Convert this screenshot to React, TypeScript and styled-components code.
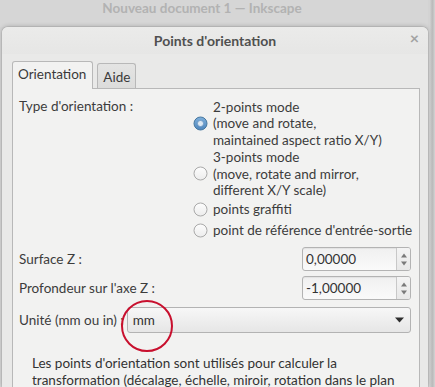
import React from "react";
import styled, { createGlobalStyle } from "styled-components";

const Global = createGlobalStyle`
  html, body { margin: 0; padding: 0; }
  body {
    width: 435px; height: 387px; overflow: hidden;
    background: #d3d3d3;
    font-family: Lato, "Open Sans", "Noto Sans", sans-serif;
    font-size: 13.5px; color: #3c3c3c;
  }
`;

const Screen = styled.div`
  width: 435px; height: 387px; overflow: hidden;
  background: linear-gradient(to right, #d3d3d3 0, #d3d3d3 430px, #c4c4c4 431px, #b9b9b9 433px, #cfcfcf 434px);
`;

const AppTitle = styled.div`
  height: 27px; line-height: 17px; text-align: center;
  padding-right: 24px; box-sizing: border-box;
  font-weight: bold; font-size: 13.5px; color: #b2b2b2;
  background: #d6d6d6;
  width: 428px;
`;

const Dialog = styled.div`
  margin-left: 2px; width: 426px; height: 360px;
  background: #e9e9e8;
  border-radius: 6px 6px 0 0;
  box-shadow: 0 -1px 4px rgba(0,0,0,0.18), 0 0 0 1px rgba(0,0,0,0.06);
  overflow: hidden;
`;

const DialogTitle = styled.div`
  height: 27px; display: flex; align-items: center; justify-content: center;
  position: relative;
  font-weight: bold; color: #505050; font-size: 14px;
  background: linear-gradient(#ebebea, #e6e6e5);
`;

const Close = styled.span`
  position: absolute; right: 9px; top: 1px;
  color: #a2a2a2; font-size: 16px; font-weight: bold;
`;

const Body = styled.div`
  padding: 7px 8px 0 10px;
`;

const Tabs = styled.div`
  display: flex; align-items: flex-end; gap: 4px; height: 27px;
`;

const Tab = styled.div<{ $active?: boolean }>`
  height: ${p => (p.$active ? 28 : 25)}px;
  box-sizing: border-box;
  padding: ${p => (p.$active ? "0 6px 3px 5px" : "2px 5px 0")};
  display: flex; align-items: center;
  border: 1px solid #b8b8b8; border-bottom: none;
  border-radius: 3px 3px 0 0;
  background: ${p => (p.$active ? "#f2f2f1" : "linear-gradient(#e4e4e3, #dcdcdb)")};
  color: #3a3a3a;
  margin-bottom: ${p => (p.$active ? -1 : 0)}px;
  position: relative; z-index: ${p => (p.$active ? 1 : 0)};
`;

const Panel = styled.div`
  border: 1px solid #b8b8b8;
  background: #f2f2f1;
  height: 320px;
  box-sizing: border-box;
  padding: 9px 8px 0 6px;
`;

const TypeRow = styled.div`
  display: grid; grid-template-columns: 174px 1fr;
  align-items: start;
`;

const Label = styled.div`
  line-height: 16.5px;
`;

const Options = styled.div`
  display: flex; flex-direction: column;
`;

const Option = styled.div<{ $h: number }>`
  display: flex; align-items: center; gap: 5px;
  min-height: ${p => p.$h}px;
`;

const OptionText = styled.div`
  line-height: 16.5px; white-space: nowrap;
`;

const RadioSvg = styled.svg`
  flex: none; width: 15px; height: 15px;
`;

const Radio = ({ checked }: { checked?: boolean }) => (
  <RadioSvg viewBox="0 0 15 15">
    <defs>
      <linearGradient id="rb" x1="0" y1="0" x2="0" y2="1">
        <stop offset="0" stopColor="#7fb0db" />
        <stop offset="1" stopColor="#4f86bd" />
      </linearGradient>
      <linearGradient id="rw" x1="0" y1="0" x2="0" y2="1">
        <stop offset="0" stopColor="#fdfdfd" />
        <stop offset="1" stopColor="#ececec" />
      </linearGradient>
    </defs>
    {checked ? (
      <>
        <circle cx="7.5" cy="7.5" r="6.5" fill="url(#rb)" stroke="#46779f" strokeWidth="1" />
        <circle cx="7.5" cy="7.5" r="3" fill="#dde9f4" stroke="#5d8cb8" strokeWidth="0.6" />
      </>
    ) : (
      <circle cx="7.5" cy="7.5" r="6.5" fill="url(#rw)" stroke="#a9a9a9" strokeWidth="1" />
    )}
  </RadioSvg>
);

const FieldRow = styled.div<{ $mt: number }>`
  display: flex; align-items: center; justify-content: space-between;
  margin-top: ${p => p.$mt}px;
`;

const Spin = styled.div`
  width: 109px; height: 24px; box-sizing: border-box;
  border: 1px solid #b3b3b3; border-radius: 3px;
  background: linear-gradient(#f0f0f0, #fafafa);
  display: flex; align-items: stretch;
  box-shadow: inset 0 1px 1px rgba(0,0,0,0.06);
`;

const SpinValue = styled.div`
  flex: 1; display: flex; align-items: center; padding-left: 3px; color: #333;
`;

const SpinButtons = styled.div`
  width: 13px; border-left: 1px solid #c8c8c8;
  display: flex; flex-direction: column; align-items: center; justify-content: center; gap: 3px;
  background: linear-gradient(#f4f4f4, #e8e8e8);
  border-radius: 0 2px 2px 0;
`;

const Arrow = ({ up }: { up?: boolean }) => (
  <svg width="6" height="5" viewBox="0 0 6 5">
    <path d={up ? "M0 4.5 L3 0.5 L6 4.5 Z" : "M0 0.5 L3 4.5 L6 0.5 Z"} fill="#7a7a7a" />
  </svg>
);

const ComboRow = styled.div`
  display: flex; align-items: center; gap: 3px; margin-top: 7px;
`;

const Combo = styled.div`
  flex: 1; height: 26px; box-sizing: border-box;
  border: 1px solid #b3b3b3; border-radius: 3px;
  background: linear-gradient(#f7f7f7, #e6e6e6);
  display: flex; align-items: center; justify-content: space-between;
  padding: 0 6px 0 5px; position: relative;
  color: #333;
`;

const Circle = styled.svg`
  position: absolute; left: -8px; top: -9px; pointer-events: none;
`;

const Description = styled.div`
  margin-top: 22px; padding-left: 13px; line-height: 17px; color: #333;
  white-space: nowrap;
`;

export default function App() {
  return (
    <Screen>
      <Global />
      <AppTitle>Nouveau document 1 — Inkscape</AppTitle>
      <Dialog>
        <DialogTitle>
          Points d'orientation
          <Close>×</Close>
        </DialogTitle>
        <Body>
          <Tabs>
            <Tab $active>Orientation</Tab>
            <Tab>Aide</Tab>
          </Tabs>
          <Panel>
            <TypeRow>
              <Label>Type d'orientation :</Label>
              <Options>
                <Option $h={50.5}>
                  <Radio checked />
                  <OptionText>
                    2-points mode<br />(move and rotate,<br />maintained aspect ratio X/Y)
                  </OptionText>
                </Option>
                <Option $h={50.5}>
                  <Radio />
                  <OptionText>
                    3-points mode<br />(move, rotate and mirror,<br />different X/Y scale)
                  </OptionText>
                </Option>
                <Option $h={20}>
                  <Radio />
                  <OptionText>points graffiti</OptionText>
                </Option>
                <Option $h={22}>
                  <Radio />
                  <OptionText>point de référence d'entrée-sortie</OptionText>
                </Option>
              </Options>
            </TypeRow>
            <FieldRow $mt={6}>
              <span>Surface Z :</span>
              <Spin>
                <SpinValue>0,00000</SpinValue>
                <SpinButtons><Arrow up /><Arrow /></SpinButtons>
              </Spin>
            </FieldRow>
            <FieldRow $mt={5}>
              <span>Profondeur sur l'axe Z :</span>
              <Spin>
                <SpinValue>-1,00000</SpinValue>
                <SpinButtons><Arrow up /><Arrow /></SpinButtons>
              </Spin>
            </FieldRow>
            <ComboRow>
              <span>Unité (mm ou in) :</span>
              <Combo>
                <span>mm</span>
                <svg width="9" height="6" viewBox="0 0 9 6"><path d="M0 0.5 L9 0.5 L4.5 5.5 Z" fill="#2e2e2e" /></svg>
                <Circle width="54" height="54" viewBox="0 0 54 54">
                  <ellipse cx="27" cy="27" rx="25" ry="25" fill="none" stroke="#c8102e" strokeWidth="2" />
                </Circle>
              </Combo>
            </ComboRow>
            <Description>
              Les points d'orientation sont utilisés pour calculer la<br />
              transformation (décalage, échelle, miroir, rotation dans le plan
            </Description>
          </Panel>
        </Body>
      </Dialog>
    </Screen>
  );
}
